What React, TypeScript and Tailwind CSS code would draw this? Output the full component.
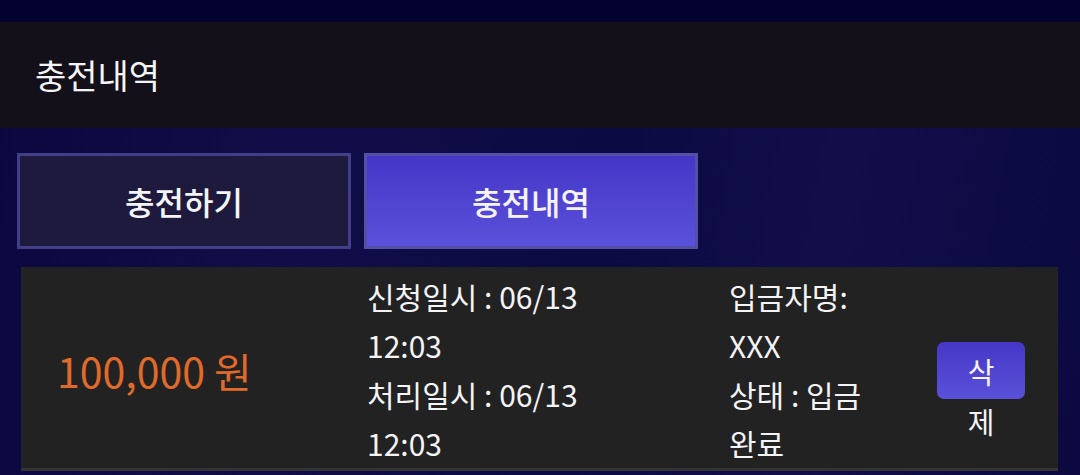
import React from "react";

export default function App() {
  return (
    <div className="w-[1080px] h-[475px] overflow-hidden bg-[#0d0a40] bg-[linear-gradient(100deg,#0b0840_0%,#100d48_30%,#0c0a42_55%,#110e4a_75%,#0b0940_100%)] font-['Noto_Sans_CJK_KR','Noto_Sans',sans-serif] text-[#f4f4f6]">
      <div className="h-[22px] bg-[#030130]" />
      <div className="h-[106px] bg-[#131019] flex items-center pl-[35px] text-[34px] leading-none">
        충전내역
      </div>
      <div className="flex gap-[13px] pl-[17px] pt-[25px]">
        <div className="w-[334px] h-[96px] border-[3px] border-[#433e8a] bg-[#1d1a3d] flex items-center justify-center text-[32px] font-medium leading-none">
          충전하기
        </div>
        <div className="w-[334px] h-[96px] border-[3px] border-[#5450a6] bg-[linear-gradient(180deg,#4536c7_0%,#5a51da_100%)] flex items-center justify-center text-[32px] font-medium leading-none">
          충전내역
        </div>
      </div>
      <div className="ml-[21px] mt-[18px] w-[1037px] bg-[#222222] border-b-[3px] border-[#343434] grid grid-cols-[346px_362px_208px_88px] items-center pt-[5px] text-[30px] leading-[49px]">
        <div className="pl-[36px] text-[#e06a2c] text-[41px] leading-none">100,000 원</div>
        <div>
          <div>신청일시 : 06/13</div>
          <div>12:03</div>
          <div>처리일시 : 06/13</div>
          <div>12:03</div>
        </div>
        <div>
          <div>입금자명:</div>
          <div>XXX</div>
          <div>상태 : 입금</div>
          <div>완료</div>
        </div>
        <div className="flex items-center h-full">
          <div className="w-[88px] h-[57px] rounded-[7px] bg-[linear-gradient(180deg,#4637c6_0%,#5a51d9_100%)] text-center pt-[4px] leading-[50px] text-[29px]">
            삭<br />제
          </div>
        </div>
      </div>
    </div>
  );
}
